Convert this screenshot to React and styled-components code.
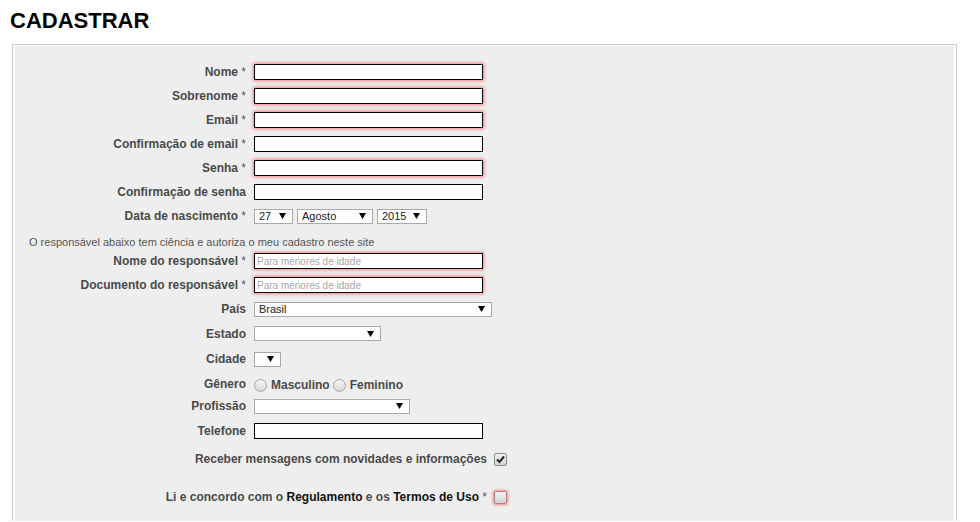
import React from 'react';
import styled, { createGlobalStyle } from 'styled-components';

const GlobalStyle = createGlobalStyle`
  body {
    margin: 0;
    background: #fff;
    font-family: "Liberation Sans", Arial, sans-serif;
  }
`;

const Arrow = () => (
  <svg width="7" height="6" viewBox="0 0 7 6">
    <polygon points="0,0 7,0 3.5,6" fill="#000" />
  </svg>
);

const Check = () => (
  <svg width="11" height="11" viewBox="0 0 11 11">
    <path d="M2 5.5 L4.5 8 L9 2.5" fill="none" stroke="#222" strokeWidth="2" />
  </svg>
);

const Field = ({ label, req, h, children }) => (
  <Row $h={h}>
    <Label>
      {label}
      {req && <Star> *</Star>}
    </Label>
    <Fields>{children}</Fields>
  </Row>
);

const Dropdown = ({ w, value }) => (
  <Select $w={w}>
    <span>{value}</span>
    <Arrow />
  </Select>
);

const App = () => {
  return (
    <Page>
      <GlobalStyle />
      <Title>CADASTRAR</Title>
      <Box>
        <Panel>
          <Field label="Nome" req>
            <TextInput $req />
          </Field>
          <Field label="Sobrenome" req>
            <TextInput $req />
          </Field>
          <Field label="Email" req>
            <TextInput $req />
          </Field>
          <Field label="Confirmação de email" req>
            <TextInput />
          </Field>
          <Field label="Senha" req>
            <TextInput $req type="password" />
          </Field>
          <Field label="Confirmação de senha">
            <TextInput type="password" />
          </Field>
          <Field label="Data de nascimento" req>
            <Dropdown w={39} value="27" />
            <Dropdown w={76} value="Agosto" />
            <Dropdown w={50} value="2015" />
          </Field>
          <Note>O responsável abaixo tem ciência e autoriza o meu cadastro neste site</Note>
          <Field label="Nome do responsável" req>
            <TextInput $req placeholder="Para menores de idade" />
          </Field>
          <Field label="Documento do responsável" req>
            <TextInput $req placeholder="Para menores de idade" />
          </Field>
          <Field label="País">
            <Dropdown w={238} value="Brasil" />
          </Field>
          <Field label="Estado" h={25}>
            <Dropdown w={127} value="" />
          </Field>
          <Field label="Cidade" h={26}>
            <Dropdown w={27} value="" />
          </Field>
          <Field label="Gênero">
            <RadioGroup>
              <Radio />
              <RadioText>Masculino</RadioText>
              <Radio />
              <RadioText>Feminino</RadioText>
            </RadioGroup>
          </Field>
          <Field label="Profissão" h={20}>
            <Dropdown w={156} value="" />
          </Field>
          <Field label="Telefone" h={29}>
            <TextInput />
          </Field>
          <CheckRow $h={28}>
            <CheckText>Receber mensagens com novidades e informações</CheckText>
            <Checkbox>
              <Check />
            </Checkbox>
          </CheckRow>
          <CheckRow $h={48}>
            <CheckText>
              Li e concordo com o <Link>Regulamento</Link> e os <Link>Termos de Uso</Link>
              <Star> *</Star>
            </CheckText>
            <Checkbox $error />
          </CheckRow>
        </Panel>
      </Box>
    </Page>
  );
};

export default App;

const Page = styled.div`
  padding: 8px 23px 0 10px;
`;

const Title = styled.h1`
  margin: 0 0 11px;
  font-size: 22px;
  line-height: 25px;
  font-weight: bold;
  color: #000;
`;

const Box = styled.div`
  margin-left: 2px;
  border: 1px solid #cccccc;
  border-bottom: none;
  padding: 1px 2px 0;
  background: #fff;
`;

const Panel = styled.div`
  background: #eeeeee;
  padding-top: 14px;
`;

const Row = styled.div`
  display: grid;
  grid-template-columns: 239px 1fr;
  align-items: center;
  height: ${(p) => p.$h || 24}px;
`;

const Label = styled.div`
  text-align: right;
  padding-right: 8px;
  font-size: 12px;
  font-weight: bold;
  color: #4a4a4a;
  white-space: nowrap;
`;

const Star = styled.span`
  font-weight: normal;
  color: #556;
`;

const Fields = styled.div`
  display: flex;
  align-items: center;
  gap: 4px;
`;

const TextInput = styled.input`
  width: 229px;
  height: 16px;
  box-sizing: border-box;
  margin: 0;
  padding: 0 2px;
  border: 1px solid #000;
  background: #fff;
  font-family: "Liberation Sans", Arial, sans-serif;
  font-size: 10px;
  outline: none;
  box-shadow: ${(p) => (p.$req ? '0 0 3px 1px rgba(255, 40, 40, 0.55)' : 'none')};

  &::placeholder {
    color: #a8a8a8;
  }
`;

const Select = styled.div`
  display: flex;
  align-items: center;
  justify-content: space-between;
  width: ${(p) => p.$w}px;
  height: 15px;
  box-sizing: border-box;
  padding: 0 6px 0 4px;
  border: 1px solid #a9a9a9;
  background: #fff;
  font-size: 11px;
  color: #222;
`;

const Note = styled.div`
  height: 21px;
  box-sizing: border-box;
  padding: 8px 0 0 14px;
  font-size: 11px;
  line-height: 13px;
  color: #555;
`;

const RadioGroup = styled.div`
  display: flex;
  align-items: center;
  padding-top: 2px;
`;

const Radio = styled.span`
  width: 13px;
  height: 13px;
  box-sizing: border-box;
  border-radius: 50%;
  border: 1px solid #a5a5a5;
  background: linear-gradient(#f6f6f6, #dadada);
  margin-right: 4px;
`;

const RadioText = styled.span`
  font-size: 12px;
  font-weight: bold;
  color: #4a4a4a;
  margin-right: 3px;
`;

const CheckRow = styled.div`
  display: flex;
  justify-content: flex-end;
  align-items: center;
  gap: 7px;
  width: 492px;
  height: ${(p) => p.$h}px;
`;

const CheckText = styled.span`
  font-size: 12px;
  font-weight: bold;
  color: #4a4a4a;
  white-space: nowrap;
`;

const Link = styled.span`
  color: #111;
`;

const Checkbox = styled.span`
  display: flex;
  align-items: center;
  justify-content: center;
  width: 13px;
  height: 13px;
  box-sizing: border-box;
  border-radius: 2px;
  border: 1px solid ${(p) => (p.$error ? '#b08080' : '#8e8e8e')};
  background: linear-gradient(#f2f2f2, #d2d2d2);
  box-shadow: ${(p) => (p.$error ? '0 0 3px 1px rgba(255, 40, 40, 0.55)' : 'none')};
`;
